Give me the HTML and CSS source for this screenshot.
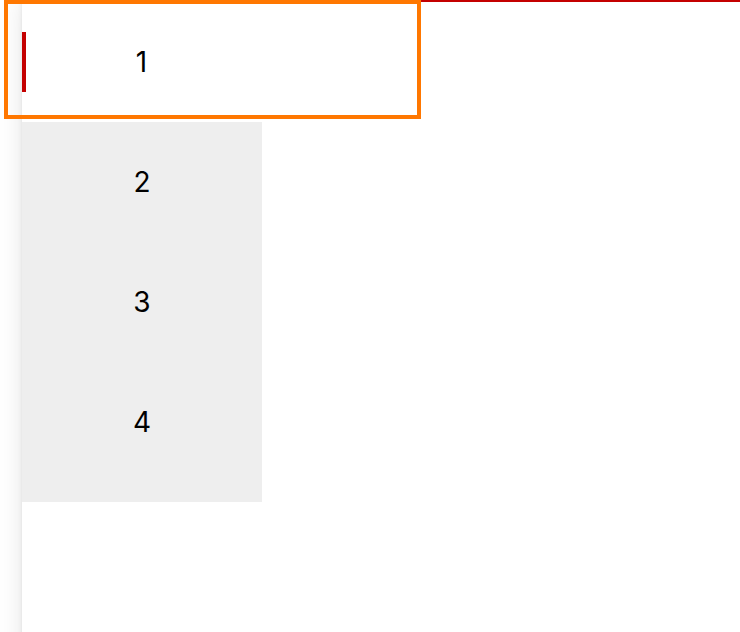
FILE: index.html
```html
<!DOCTYPE html>
<html lang="en">
<head>
  <meta charset="UTF-8">
  <title>Tabs</title>
  <link rel="stylesheet" href="styles.css">
</head>
<body>
  <div class="page">
    <div class="panel">
      <ul class="tabs">
        <li class="tab active">1</li>
        <li class="tab">2</li>
        <li class="tab">3</li>
        <li class="tab">4</li>
      </ul>
    </div>
  </div>
  <div class="highlight"></div>
</body>
</html>
```

FILE: styles.css
```css
:root {
  --red: #c40000;
  --orange: #ff7700;
  --tab-bg: #eee;
}

* {
  box-sizing: border-box;
}

body {
  margin: 0;
  background-color: #fff;
  font-family: Inter, "Liberation Sans", Arial, sans-serif;
}

.page {
  height: 100vh;
  padding-left: 22px;
  overflow: hidden;
}

.panel {
  height: calc(100vh + 40px);
  border-top: 2px solid var(--red);
  background-color: #fff;
  box-shadow: 0 0 4px rgba(0, 0, 0, 0.09), 0 0 24px rgba(0, 0, 0, 0.1);
}

.tabs {
  width: 240px;
  height: 500px;
  margin: 0;
  padding: 0;
  list-style: none;
  background-color: var(--tab-bg);
}

.tab {
  display: flex;
  align-items: center;
  justify-content: center;
  height: 120px;
  font-size: 28px;
  color: #000;
}

.tab.active {
  background-color: #fff;
}

/* red marker on the left edge of the current tab */
.tab.active::before {
  content: "";
  width: 4px;
  height: 60px;
  margin-right: auto;
  background-color: var(--red);
}

.tab.active::after {
  content: "";
  width: 5px;
  margin-left: auto;
}

.highlight {
  position: absolute;
  top: 0;
  left: 4px;
  width: 417px;
  height: 119px;
  border: 4px solid var(--orange);
}
```
